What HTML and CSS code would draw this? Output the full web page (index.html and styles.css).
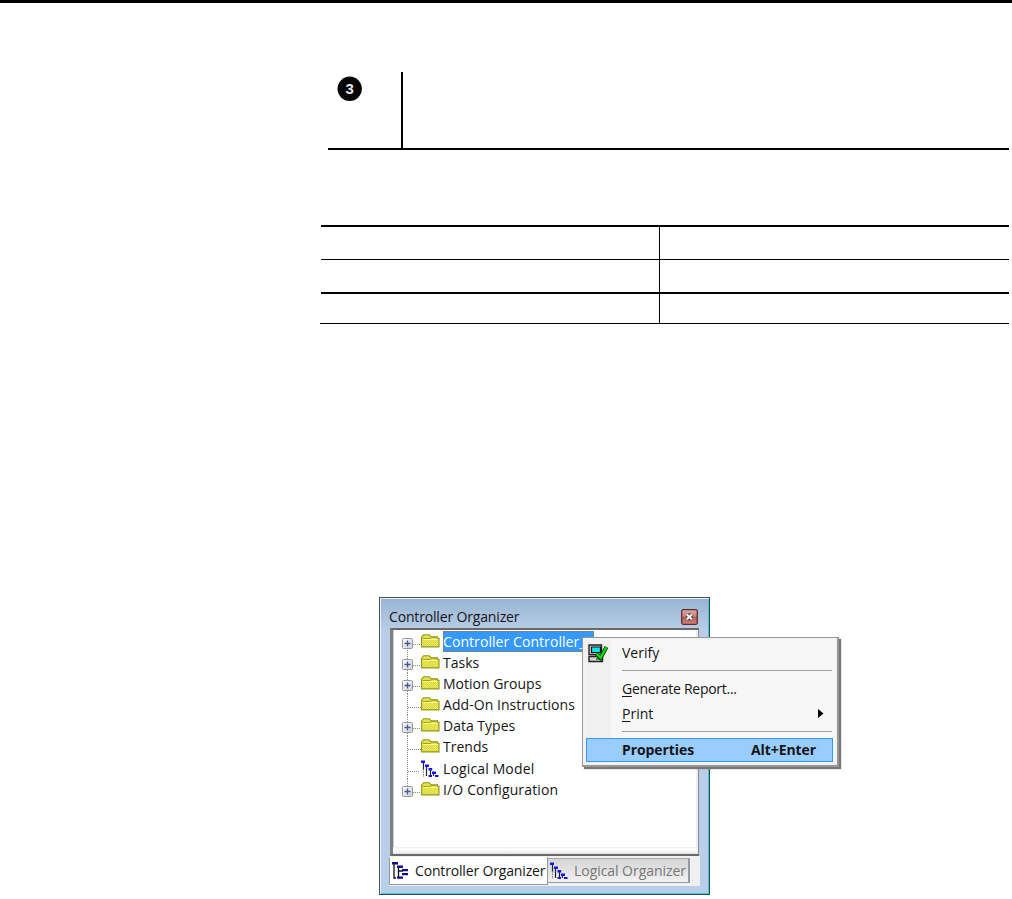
FILE: index.html
```html
<!DOCTYPE html>
<html lang="en">
<head>
<meta charset="utf-8">
<title>Controller Organizer</title>
<link rel="stylesheet" href="styles.css">
</head>
<body>
<svg class="defs" aria-hidden="true">
  <defs>
    <linearGradient id="plusfill" x1="0" y1="0" x2="1" y2="1"><stop offset="0" stop-color="#fff"/><stop offset="1" stop-color="#d0d0d0"/></linearGradient>
    <pattern id="weave" width="2" height="2" patternUnits="userSpaceOnUse"><rect width="2" height="2" fill="#e9e95a"/><rect width="1" height="1" fill="#d9d944"/><rect x="1" y="1" width="1" height="1" fill="#d9d944"/></pattern>
    <symbol id="plus" viewBox="0 0 11 11"><rect x=".5" y=".5" width="10" height="10" rx="1" fill="url(#plusfill)" stroke="#989898"/><path d="M2.5 5.5h6M5.5 2.5v6" stroke="#4058a8" stroke-width="1.3"/></symbol>
    <symbol id="folder" viewBox="0 0 19 14"><path d="M.6 12.900V3.200L2.600.7h5.600l1.800 2h6.500v1.500h1.500v8.700z" fill="url(#weave)" stroke="#96961c" stroke-width="1.100"/><path d="M1.500 4.500h7.800l1.300-1.200H16" fill="none" stroke="#a3a31c"/><path d="M1.700 5.500h15" stroke="#f7f78c"/></symbol>
    <symbol id="logical" viewBox="0 0 18 18"><path d="M2.500 2v8M5.500 5v11M9.500 9v7M12.500 12v4" stroke="#222" stroke-width="1.200" fill="none"/><path d="M2.500 9v8" stroke="#777" stroke-dasharray="1.500 1"/><path d="M0 .5h4v2.500H0zM4 4.500h4V7H4zM7.500 8h3.700v2.500H7.500zM11 11.500h4V14h-4zM7.500 15h3.500v2H7.500zM14 15h3.500v2H14z" fill="#1616e8"/></symbol>
    <symbol id="organizer" viewBox="0 0 17 18"><path d="M2 2v14h2M6.500 5v11M7 9h4" stroke="#111" stroke-width="1.300" fill="none"/><path d="M0 0h6v2.500H0zM5 3.500h6V6H5zM10 7h6v2.300h-6zM10 11h6v2.300h-6zM5 14.500h6v2.300H5z" fill="#10108c"/></symbol>
  </defs>
</svg>
<div class="page">
  <div class="step"><div class="step-no"><svg width="26" height="26" viewBox="0 0 26 26"><circle cx="12.700" cy="12.800" r="12.200" fill="#060606"/><text x="12.700" y="18" text-anchor="middle" class="digit">3</text></svg></div><div class="step-text"></div></div>
  <div class="grid">
    <div class="cell head"></div><div class="cell head right"></div>
    <div class="cell mid"></div><div class="cell mid right"></div>
    <div class="cell last"></div><div class="cell last right"></div>
  </div>
  <div class="window">
    <div class="title"><span class="t-title">Controller Organizer</span>
      <svg class="close" width="17" height="16" viewBox="0 0 17 16"><defs><linearGradient id="red" x2="0" y2="1"><stop stop-color="#e4a69c"/><stop offset=".45" stop-color="#c9877d"/><stop offset=".5" stop-color="#b85e53"/><stop offset="1" stop-color="#cf8278"/></linearGradient></defs><rect x=".7" y=".7" width="15.600" height="14.600" rx="1.500" fill="url(#red)" stroke="#602d36" stroke-width="1.300"/><path d="M5.800 5.500l5 4.800M10.800 5.500l-5 4.800" stroke="#4b4850" stroke-width="4"/><path d="M5.800 5.500l5 4.800M10.800 5.500l-5 4.800" stroke="#f4f4f4" stroke-width="2"/></svg>
    </div>
    <div class="tree">
      <div class="row first"><svg class="twig"><path d="M13.500 17V22M19 13.500h9" class="dots"/><use href="#plus" x="8" y="7" width="11" height="11"/><use href="#folder" x="27" y="3" width="19" height="14"/></svg><span class="label selected"><span class="t-sel">Controller Controller_1</span></span></div>
      <div class="row"><svg class="twig"><path d="M13.500 0V22M19 13.500h9" class="dots"/><use href="#plus" x="8" y="7" width="11" height="11"/><use href="#folder" x="27" y="3" width="19" height="14"/></svg><span class="label t-tasks">Tasks</span></div>
      <div class="row"><svg class="twig"><path d="M13.500 0V22M19 13.500h9" class="dots"/><use href="#plus" x="8" y="7" width="11" height="11"/><use href="#folder" x="27" y="3" width="19" height="14"/></svg><span class="label t-motion">Motion Groups</span></div>
      <div class="row"><svg class="twig"><path d="M13.500 0V22M14 13.500h14" class="dots"/><use href="#folder" x="27" y="3" width="19" height="14"/></svg><span class="label t-addon">Add-On Instructions</span></div>
      <div class="row"><svg class="twig"><path d="M13.500 0V22M19 13.500h9" class="dots"/><use href="#plus" x="8" y="7" width="11" height="11"/><use href="#folder" x="27" y="3" width="19" height="14"/></svg><span class="label t-data">Data Types</span></div>
      <div class="row"><svg class="twig"><path d="M13.500 0V22M14 13.500h14" class="dots"/><use href="#folder" x="27" y="3" width="19" height="14"/></svg><span class="label t-trends">Trends</span></div>
      <div class="row"><svg class="twig"><path d="M13.500 0V22M14 13.500h12" class="dots"/><use href="#logical" x="27" y="2" width="18" height="18"/></svg><span class="label t-logical">Logical Model</span></div>
      <div class="row"><svg class="twig"><path d="M13.500 0V10M19 13.500h9" class="dots"/><use href="#plus" x="8" y="7" width="11" height="11"/><use href="#folder" x="27" y="3" width="19" height="14"/></svg><span class="label t-io">I/O Configuration</span></div>
      <div class="scroll"></div>
    </div>
    <div class="tabs">
      <div class="tab active"><svg width="17" height="18"><use href="#organizer" width="17" height="18"/></svg><span class="t-tab1">Controller Organizer</span></div>
      <div class="tab"><svg width="18" height="18"><use href="#logical" width="18" height="18"/></svg><span class="t-tab2">Logical Organizer</span></div>
    </div>
    <div class="menu">
      <div class="item verify"><svg class="verify-icon" width="20" height="19" viewBox="0 0 20 19"><path d="M1 1h12.500v9.500H1zM1 12.500h13.500v5H1z" fill="#d4d4d4" stroke="#222" stroke-width="1.400"/><path d="M3.500 3h9v5.500h-9z" fill="#10e4ec" stroke="#111" stroke-width="1.200"/><path d="M8 15h4" stroke="#333" stroke-width="1.200"/><path d="M8.500 10l4 4L18.500 3" fill="none" stroke="#064506" stroke-width="4"/><path d="M8.800 10l3.700 3.600L18.500 3" fill="none" stroke="#0be010" stroke-width="2.200"/></svg><span class="t-verify">Verify</span></div>
      <div class="sep"></div>
      <div class="item report"><span class="t-report"><u>G</u>enerate Report...</span></div>
      <div class="item print"><span class="t-print"><u>P</u>rint</span><svg class="arrow" width="6" height="9" viewBox="0 0 6 9"><path d="M0 0l5.500 4.500L0 9z"/></svg></div>
      <div class="sep second"></div>
      <div class="item hot"><span class="t-prop">Properties</span><span class="t-alt">Alt+Enter</span></div>
    </div>
  </div>
</div>
</body>
</html>
```
FILE: styles.css
```css
* { box-sizing: border-box; }
body { margin: 0; background: #fff; font: 14px/21px "Open Sans", "Noto Sans", sans-serif; color: #151515; }
svg { display: block; flex: none; }
span { white-space: nowrap; }
.defs { width: 0; height: 0; }
.page { height: 899px; border-top: 3px solid #000; padding-top: 69px; overflow: hidden; }
.step { display: flex; margin-left: 328px; width: 681px; height: 78px; border-bottom: 2px solid #000; }
.step-no { width: 75px; border-right: 2px solid #000; padding: 4px 0 0 9px; }
.digit { font: bold 15px "Liberation Sans", sans-serif; fill: #e8e8e8; }
.grid { display: grid; grid-template: 33px 34px 30px / 338px 350px; margin: 75px 0 0 321px; width: 688px; border-top: 2px solid #000; }
.cell { border-bottom: 1px solid #000; }
.mid { border-bottom-width: 2px; }
.last:not(.right) { margin-left: -1px; }
.right { border-left: 1px solid #000; }
.window { position: relative; margin: 273px 0 0 379px; width: 331px; height: 298px; border: 1px solid #45525a; border-right-color: #284e59; border-bottom-color: #284e59; padding: 0 9px; background: linear-gradient(#98b4d1, #b9cfe9 34px, #b9cfe9); box-shadow: inset 1px 1px 0 #e9f0f7, inset -1px -1px 0 #4cc4d8; }
.title { display: flex; justify-content: space-between; height: 30px; padding: 11px 2px 0 0; line-height: 15px; }
.t-title, .t-tab1 { letter-spacing: -.16px; }
.t-tab2 { letter-spacing: -.05px; }
.t-sel { letter-spacing: .07px; }
.t-addon { letter-spacing: .05px; }
.t-logical, .t-io { letter-spacing: .14px; }
.t-report { letter-spacing: -.28px; }
.tree { display: flex; flex-direction: column; margin-left: 1px; width: 309px; height: 228px; border: 2px solid #686868; border-left: 3px solid #808080; border-right: 1px solid #888; box-shadow: inset 1px 0 0 #ccc, inset -2px 0 0 #eee; background: #fff; padding: 1px 0 0 1px; }
.row { display: flex; flex: none; height: 21.100px; }
.twig { width: 49px; height: 22px; overflow: visible; }
.dots { stroke: #888; stroke-dasharray: 1 1; fill: none; }
.label { height: 21px; line-height: 21px; }
.selected { width: 151px; background: #3399ff; color: #fff; outline: 1px dotted #b66c32; outline-offset: -1px; }
.scroll { margin: auto 0 0 -1px; height: 7px; background: linear-gradient(#eee, #fff 35%, #e4e4e4); }
.tabs { display: flex; align-items: flex-start; width: 311px; height: 30px; padding-top: 1px; background: #f0f0f0; }
.tab { display: flex; gap: 6px; width: 142px; height: 25px; margin-top: 1px; padding: 3px 0 0 2px; border: 1px solid #929aa4; border-top-color: #aaa; border-left: 0; border-right-width: 2px; background: linear-gradient(#d5d5d5, #f1f1f1); color: #777; line-height: 18px; }
.active { width: 159px; height: 28px; margin: 0; padding-top: 5px; border: 1px solid #929aa4; border-top: 0; background: #fff; color: #151515; line-height: 17px; }
.menu { position: absolute; left: 202px; top: 39px; width: 257px; height: 130px; border: 1px solid #979797; border-right-width: 2px; border-bottom-width: 2px; padding: 2px 3px; background: linear-gradient(90deg, #f0f0f0 28px, #f7f7f7 28px); box-shadow: inset 0 0 0 2px #f3f3f3, 2px 2px 1px #777; }
.item { display: flex; align-items: center; height: 25px; padding-left: 36px; }
.verify { height: 24px; }
.verify-icon { margin: 2px 14px 0 -34px; }
.sep { height: 1px; margin: 6px 2px 5px 36px; background: #a0a0a0; }
.report { height: 24px; }
.print { height: 26px; }
.arrow { margin-left: auto; margin-right: 10px; }
.second { margin: 5px 2px 6px 36px; }
.hot { height: 24px; margin-right: 1px; padding: 0 16px 2px 35px; justify-content: space-between; border: 1px solid #3399ff; background: #99ccff; font-weight: 700; letter-spacing: -.08px; }
u { text-underline-offset: 2px; }
```
